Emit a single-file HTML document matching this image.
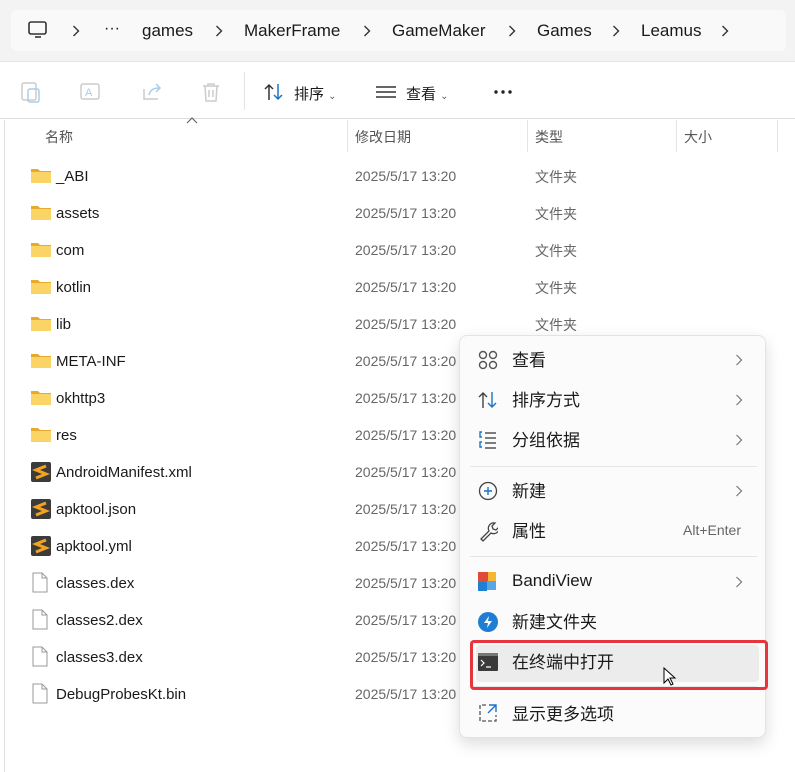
<!DOCTYPE html>
<html><head><meta charset="utf-8"><style>
*{margin:0;padding:0;box-sizing:border-box}
body{width:795px;height:772px;overflow:hidden;background:#fff;font-family:"Liberation Sans","Noto Sans CJK SC",sans-serif;color:#1a1a1a;position:relative}
.abs{position:absolute}
.top{left:0;top:0;width:795px;height:62px;background:#f3f3f3;border-bottom:1px solid #e5e5e5}
.bc{left:11px;top:10px;width:775px;height:41px;background:#f9f9f9;border-radius:6px}
.t{position:absolute;white-space:nowrap}
.tb{left:0;top:62px;width:795px;height:57px;background:#fff;border-bottom:1px solid #dcdcdc}
.hdr{font-size:14px;color:#555}
.row{font-size:15px}
.date{font-size:14px;color:#666}
.menu{left:459px;top:335px;width:307px;height:403px;background:#fbfbfb;border:1px solid #e3e3e3;border-radius:8px;box-shadow:0 6px 16px rgba(0,0,0,.14)}
.mi{position:absolute;left:52px;font-size:17px;color:#1a1a1a}
.chev{position:absolute;left:275px}
.sep{position:absolute;left:10px;width:287px;height:1px;background:#e5e5e5}
</style></head><body>
<div class="abs top"></div>
<div class="abs bc"></div>
<svg class="abs" style="left:27px;top:20px" width="22" height="20" viewBox="0 0 22 20"><rect x="2" y="2" width="17" height="12" rx="2" fill="none" stroke="#333" stroke-width="1.6"/><path d="M8 17h6" stroke="#333" stroke-width="1.6"/></svg>
<svg class="abs" style="left:72px;top:25px" width="8" height="12"><path d="M1.5 1l5 5-5 5" fill="none" stroke="#333" stroke-width="1.4"/></svg>
<div class="t" style="left:104px;top:20px;font-size:16px">···</div>
<div class="t" style="left:142px;top:21px;font-size:17px">games</div>
<svg class="abs" style="left:215px;top:25px" width="8" height="12"><path d="M1.5 1l5 5-5 5" fill="none" stroke="#333" stroke-width="1.4"/></svg>
<div class="t" style="left:244px;top:21px;font-size:17px">MakerFrame</div>
<svg class="abs" style="left:363px;top:25px" width="8" height="12"><path d="M1.5 1l5 5-5 5" fill="none" stroke="#333" stroke-width="1.4"/></svg>
<div class="t" style="left:392px;top:21px;font-size:17px">GameMaker</div>
<svg class="abs" style="left:508px;top:25px" width="8" height="12"><path d="M1.5 1l5 5-5 5" fill="none" stroke="#333" stroke-width="1.4"/></svg>
<div class="t" style="left:537px;top:21px;font-size:17px">Games</div>
<svg class="abs" style="left:612px;top:25px" width="8" height="12"><path d="M1.5 1l5 5-5 5" fill="none" stroke="#333" stroke-width="1.4"/></svg>
<div class="t" style="left:641px;top:21px;font-size:17px">Leamus</div>
<svg class="abs" style="left:721px;top:25px" width="8" height="12"><path d="M1.5 1l5 5-5 5" fill="none" stroke="#333" stroke-width="1.4"/></svg>

<div class="abs tb"></div>
<svg class="abs" style="left:20px;top:80px" width="22" height="24"><rect x="2" y="3" width="14" height="17" rx="2" fill="none" stroke="#ccc" stroke-width="1.5"/><rect x="8" y="9" width="11" height="13" rx="2" fill="none" stroke="#a8cde8" stroke-width="1.5"/></svg>
<svg class="abs" style="left:79px;top:81px" width="24" height="22"><rect x="2" y="3" width="18" height="15" rx="2" fill="none" stroke="#ccc" stroke-width="1.5"/><text x="6" y="15" font-size="11" fill="#a8cde8" font-family="Liberation Sans">A</text></svg>
<svg class="abs" style="left:141px;top:81px" width="24" height="22"><path d="M3 8v10h14" fill="none" stroke="#ccc" stroke-width="1.5"/><path d="M8 14c1-5 5-7 10-7M15 3l4 4-4 4" fill="none" stroke="#a8cde8" stroke-width="1.5"/></svg>
<svg class="abs" style="left:200px;top:81px" width="22" height="22"><path d="M3 5h16M8 5V3h6v2M5 5l1 15h10l1-15M9 9v7M13 9v7" fill="none" stroke="#ccc" stroke-width="1.5"/></svg>
<div class="abs" style="left:244px;top:72px;width:1px;height:38px;background:#e3e3e3"></div>
<svg class="abs" style="left:263px;top:82px" width="22" height="20"><path d="M6 18V3M2 7l4-4 4 4" fill="none" stroke="#333" stroke-width="1.5"/><path d="M15 2v15M11 13l4 4 4-4" fill="none" stroke="#1a73c9" stroke-width="1.5"/></svg>
<div class="t" style="left:294px;top:83px;font-size:15px">排序 <span style="font-size:10px;color:#666">⌄</span></div>
<svg class="abs" style="left:375px;top:84px" width="22" height="16"><path d="M1 3h20M1 8h20M1 13h20" stroke="#333" stroke-width="1.5"/></svg>
<div class="t" style="left:406px;top:83px;font-size:15px">查看 <span style="font-size:10px;color:#666">⌄</span></div>
<svg class="abs" style="left:493px;top:89px" width="20" height="6"><circle cx="3" cy="3" r="1.7" fill="#222"/><circle cx="10" cy="3" r="1.7" fill="#222"/><circle cx="17" cy="3" r="1.7" fill="#222"/></svg>

<div class="abs" style="left:4px;top:120px;width:1px;height:652px;background:#e0e0e0"></div>
<svg class="abs" style="left:186px;top:117px" width="12" height="8"><path d="M1 6l5-5 5 5" fill="none" stroke="#666" stroke-width="1.2"/></svg>
<div class="t hdr" style="left:45px;top:127px">名称</div>
<div class="t hdr" style="left:355px;top:127px">修改日期</div>
<div class="t hdr" style="left:535px;top:127px">类型</div>
<div class="t hdr" style="left:684px;top:127px">大小</div>
<div class="abs" style="left:347px;top:120px;width:1px;height:32px;background:#e5e5e5"></div>
<div class="abs" style="left:527px;top:120px;width:1px;height:32px;background:#e5e5e5"></div>
<div class="abs" style="left:676px;top:120px;width:1px;height:32px;background:#e5e5e5"></div>
<div class="abs" style="left:777px;top:120px;width:1px;height:32px;background:#e5e5e5"></div>

<div id="rows"></div>
<script>
var items=[["_ABI","f"],["assets","f"],["com","f"],["kotlin","f"],["lib","f"],["META-INF","f"],["okhttp3","f"],["res","f"],["AndroidManifest.xml","s"],["apktool.json","s"],["apktool.yml","s"],["classes.dex","d"],["classes2.dex","d"],["classes3.dex","d"],["DebugProbesKt.bin","d"]];
var h="";
items.forEach(function(it,i){var y=176+37*i;var ic;
if(it[1]=="f")ic='<svg class="abs" style="left:31px;top:'+(y-9)+'px" width="20" height="16"><path d="M0 2h7l2 2h11v11H0z" fill="#e9a92c"/><rect x="0" y="5" width="20" height="11" fill="#fbd466"/></svg>';
else if(it[1]=="s")ic='<svg class="abs" style="left:31px;top:'+(y-10)+'px" width="20" height="20"><rect width="20" height="20" rx="2" fill="#3b3b3b"/><path d="M15 4L5 8l10 4-10 4" fill="none" stroke="#f4a320" stroke-width="3"/></svg>';
else ic='<svg class="abs" style="left:32px;top:'+(y-11)+'px" width="16" height="21"><path d="M1 1h9l5 5v14H1z" fill="#fff" stroke="#999"/><path d="M10 1v5h5" fill="none" stroke="#999"/></svg>';
h+=ic+'<div class="t row" style="left:56px;top:'+(y-8)+'px">'+it[0]+'</div>';
h+='<div class="t date" style="left:355px;top:'+(y-8)+'px">2025/5/17 13:20</div>';
if(it[1]=="f"&&i<5)h+='<div class="t date" style="left:535px;top:'+(y-9)+'px">文件夹</div>';
});
document.getElementById("rows").innerHTML=h;
</script>

<div class="abs menu">
<svg class="abs" style="left:18px;top:14px" width="20" height="20"><g fill="none" stroke="#555" stroke-width="1.4"><circle cx="5" cy="5" r="3.5"/><circle cx="15" cy="5" r="3.5"/><circle cx="5" cy="15" r="3.5"/><circle cx="15" cy="15" r="3.5"/></g></svg>
<div class="mi" style="top:10px">查看</div><svg class="chev" style="top:18px" width="8" height="12"><path d="M1.5 1l5 5-5 5" fill="none" stroke="#777" stroke-width="1.2"/></svg>
<svg class="abs" style="left:18px;top:54px" width="20" height="20"><path d="M5 18V3M1 7l4-4 4 4" fill="none" stroke="#444" stroke-width="1.4"/><path d="M14 2v15M10 13l4 4 4-4" fill="none" stroke="#1a73c9" stroke-width="1.4"/></svg>
<div class="mi" style="top:50px">排序方式</div><svg class="chev" style="top:58px" width="8" height="12"><path d="M1.5 1l5 5-5 5" fill="none" stroke="#777" stroke-width="1.2"/></svg>
<svg class="abs" style="left:18px;top:94px" width="20" height="20"><path d="M4 2H2v5h2M4 12H2v5h2" fill="none" stroke="#1a73c9" stroke-width="1.4"/><path d="M7 3h11M7 8h11M7 13h11M7 18h11" stroke="#555" stroke-width="1.4"/></svg>
<div class="mi" style="top:90px">分组依据</div><svg class="chev" style="top:98px" width="8" height="12"><path d="M1.5 1l5 5-5 5" fill="none" stroke="#777" stroke-width="1.2"/></svg>
<div class="sep" style="top:130px"></div>
<svg class="abs" style="left:18px;top:145px" width="20" height="20"><circle cx="10" cy="10" r="8.5" fill="none" stroke="#444" stroke-width="1.3"/><path d="M10 6v8M6 10h8" stroke="#1a73c9" stroke-width="1.4"/></svg>
<div class="mi" style="top:141px">新建</div><svg class="chev" style="top:149px" width="8" height="12"><path d="M1.5 1l5 5-5 5" fill="none" stroke="#777" stroke-width="1.2"/></svg>
<svg class="abs" style="left:18px;top:184px" width="20" height="22"><path d="M3 19l8-8c-2-4 1-9 6-8l-3 3 1 3 3 1 3-3c1 5-4 8-8 6l-8 8z" fill="none" stroke="#444" stroke-width="1.3"/></svg>
<div class="mi" style="top:181px">属性</div><div class="t" style="left:223px;top:186px;font-size:14px;color:#666">Alt+Enter</div>
<div class="sep" style="top:220px"></div>
<svg class="abs" style="left:18px;top:236px" width="20" height="20"><rect x="0" y="0" width="10" height="10" fill="#e04a3a"/><rect x="10" y="0" width="8" height="9" fill="#f5b731"/><rect x="0" y="10" width="9" height="9" fill="#1f7fd1"/><rect x="9" y="9" width="9" height="9" fill="#57a7e8"/></svg>
<div class="mi" style="top:235px">BandiView</div><svg class="chev" style="top:240px" width="8" height="12"><path d="M1.5 1l5 5-5 5" fill="none" stroke="#777" stroke-width="1.2"/></svg>
<svg class="abs" style="left:18px;top:276px" width="20" height="20"><circle cx="10" cy="10" r="10" fill="#1e7ed4"/><path d="M11 4l-5 7h4l-1 5 5-7h-4z" fill="#fff"/></svg>
<div class="mi" style="top:272px">新建文件夹</div>
<div class="abs" style="left:16px;top:309px;width:283px;height:37px;background:#ececec;border-radius:4px"></div>
<svg class="abs" style="left:18px;top:317px" width="20" height="18"><rect width="20" height="18" rx="1" fill="#3a3a3a"/><rect width="20" height="3" fill="#777"/><path d="M3 7l3 3-3 3M8 14h5" fill="none" stroke="#fff" stroke-width="1.2"/></svg>
<div class="mi" style="top:312px">在终端中打开</div>
<div class="sep" style="top:350px"></div>
<svg class="abs" style="left:18px;top:367px" width="20" height="20"><path d="M8 2H2v16h16v-6" fill="none" stroke="#555" stroke-width="1.3" stroke-dasharray="4 2"/><path d="M11 2h7v7M18 2l-8 8" fill="none" stroke="#1a73c9" stroke-width="1.4"/></svg>
<div class="mi" style="top:364px">显示更多选项</div>
</div>
<div class="abs" style="left:470px;top:640px;width:298px;height:50px;border:3px solid #e8343c;border-radius:4px"></div>
<svg class="abs" style="left:663px;top:667px" width="14" height="20"><path d="M1 1v15l4-4 3 6 2-1-3-6h5z" fill="#fff" stroke="#000" stroke-width="1"/></svg>
</body></html>
